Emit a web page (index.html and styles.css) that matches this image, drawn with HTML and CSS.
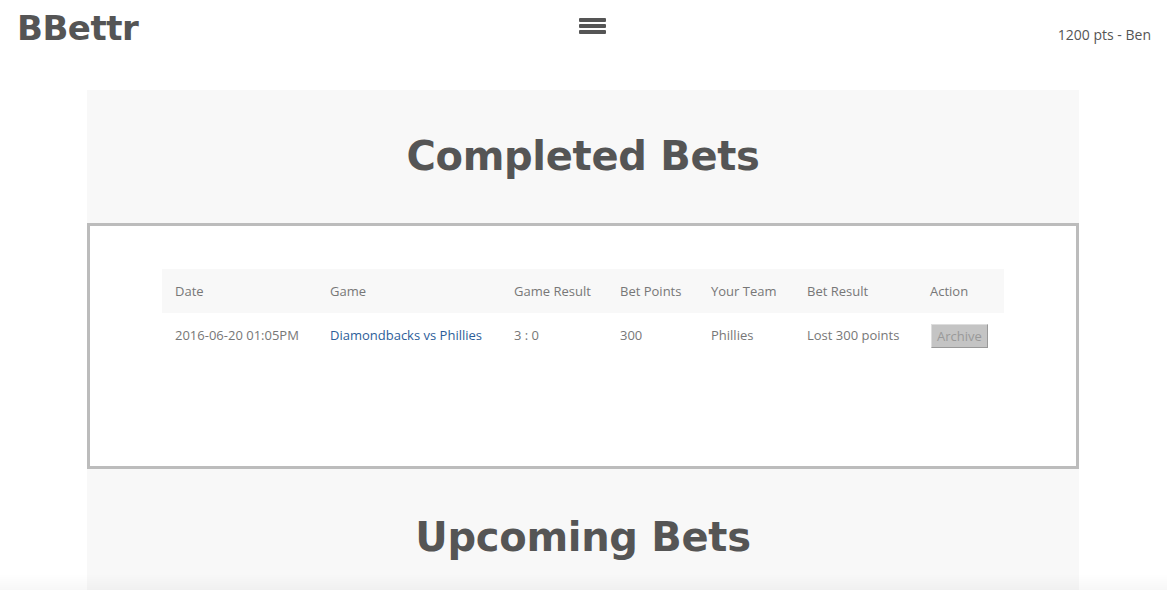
FILE: index.html
```html
<!DOCTYPE html>
<html>
<head>
<meta charset="utf-8">
<link rel="stylesheet" href="styles.css">
</head>
<body>
<header class="topbar">
  <div class="logo">BBettr</div>
  <div class="menu-btn" aria-label="menu">
    <span></span><span></span><span></span>
  </div>
  <div class="user">1200 pts - Ben</div>
</header>
<main class="page">
  <section class="panel">
    <h1 class="title">Completed Bets</h1>
    <div class="bets-box">
      <table class="bets">
        <thead>
          <tr>
            <th class="c-date">Date</th>
            <th class="c-game">Game</th>
            <th class="c-res">Game Result</th>
            <th class="c-pts">Bet Points</th>
            <th class="c-team">Your Team</th>
            <th class="c-bres">Bet Result</th>
            <th class="c-act">Action</th>
          </tr>
        </thead>
        <tbody>
          <tr>
            <td>2016-06-20 01:05PM</td>
            <td><a href="#" class="game-link">Diamondbacks vs Phillies</a></td>
            <td>3 : 0</td>
            <td>300</td>
            <td>Phillies</td>
            <td>Lost 300 points</td>
            <td><button class="archive" disabled>Archive</button></td>
          </tr>
        </tbody>
      </table>
    </div>
    <h1 class="title title-upcoming">Upcoming Bets</h1>
  </section>
</main>
<div class="bottom-fade"></div>
</body>
</html>
```

FILE: styles.css
```css
html, body {
  margin: 0;
  padding: 0;
  background: #fff;
}
body {
  font-family: "Open Sans", "Liberation Sans", sans-serif;
  color: #777;
  height: 590px;
  overflow: hidden;
}
.topbar {
  display: grid;
  grid-template-columns: 1fr auto 1fr;
  align-items: start;
  height: 90px;
  padding: 0 16px 0 17px;
}
.logo {
  font-family: "DejaVu Sans", sans-serif;
  font-weight: bold;
  font-size: 34px;
  letter-spacing: -0.5px;
  color: #555;
  margin-top: 8px;
}
.menu-btn {
  display: flex;
  flex-direction: column;
  gap: 2px;
  margin-top: 18px;
  margin-left: 17px;
}
.menu-btn span {
  display: block;
  width: 27px;
  height: 4px;
  background: #555;
  border-radius: 1px;
}
.user {
  font-size: 14px;
  color: #555;
  margin-top: 25px;
  text-align: right;
}
.page {
  display: flex;
  justify-content: flex-start;
  padding-left: 87px;
}
.panel {
  width: 992px;
  background: #f8f8f8;
}
.title {
  font-family: "DejaVu Sans", sans-serif;
  font-weight: bold;
  font-size: 40px;
  color: #555;
  text-align: center;
  margin: 0;
  height: 133px;
  line-height: 133px;
  letter-spacing: -0.3px;
}
.title-upcoming {
  height: 138px;
  line-height: 136px;
}
.bets-box {
  background: #fff;
  border: 3px solid #bcbcbc;
  height: 246px;
  box-sizing: border-box;
  padding: 43px 0 0 72px;
}
.bets {
  border-collapse: collapse;
  width: 842px;
  font-size: 13px;
}
.bets th {
  background: #f8f8f8;
  font-weight: normal;
  text-align: left;
  height: 44px;
  padding: 0 13px;
  color: #777;
}
.bets td {
  height: 44px;
  padding: 0 13px;
  color: #777;
}
.c-date { width: 129px; }
.c-game { width: 158px; }
.c-res  { width: 80px; }
.c-pts  { width: 65px; }
.c-team { width: 70px; }
.c-bres { width: 97px; }
.c-act  { width: 61px; }
.game-link {
  color: #2d5e99;
  text-decoration: none;
}
.archive {
  font-family: "Open Sans", "Liberation Sans", sans-serif;
  font-size: 13px;
  color: #999;
  background: #c4c4c4;
  border: 1px solid #999;
  border-top-color: #ddd;
  border-left-color: #ddd;
  padding: 2px 5px;
  margin-left: 1px;
  margin-top: 2px;
}
.bottom-fade {
  position: fixed;
  left: 0;
  right: 0;
  bottom: 0;
  height: 16px;
  background: linear-gradient(to bottom, rgba(0,0,0,0), rgba(0,0,0,0.03));
  pointer-events: none;
}
```
